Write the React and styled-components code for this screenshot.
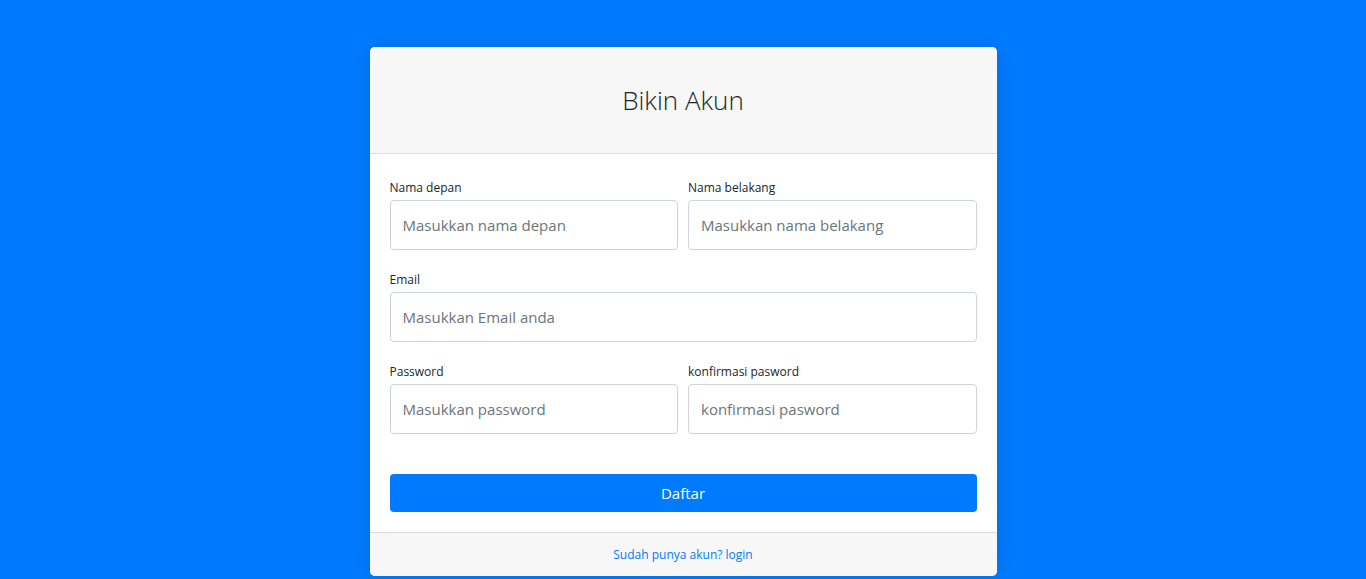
import React from 'react';
import styled, { createGlobalStyle } from 'styled-components';

const GlobalStyle = createGlobalStyle`
  * { box-sizing: border-box; }
  html, body {
    margin: 0;
    background: #007bff;
    font-family: "Open Sans", "Noto Sans", sans-serif;
    color: #212529;
  }
`;

const Page = styled.div`
  display: flex;
  justify-content: center;
  padding-top: 47px;
  min-height: 579px;
`;

const Card = styled.div`
  width: 627px;
  background: #fff;
  border-radius: 5px;
  box-shadow: 0 0 24px rgba(0, 0, 0, 0.12);
  overflow: hidden;
  align-self: flex-start;
`;

const CardHeader = styled.div`
  background: #f7f7f7;
  border-bottom: 1px solid #dcdcdc;
  height: 107px;
  display: flex;
  align-items: center;
  justify-content: center;
`;

const Title = styled.h2`
  margin: 0;
  font-weight: 300;
  font-size: 26px;
  color: #212529;
`;

const CardBody = styled.form`
  padding: 25px 20px 20px;
`;

const Row = styled.div`
  display: grid;
  grid-template-columns: ${p => (p.$cols === 1 ? '1fr' : '1fr 1fr')};
  column-gap: 10px;
  margin-bottom: 21px;
`;

const Field = styled.div`
  display: flex;
  flex-direction: column;
`;

const Label = styled.label`
  font-size: 12px;
  line-height: 18px;
  margin-bottom: 3px;
  color: #212529;
`;

const Input = styled.input`
  height: 50px;
  padding: 0 12px;
  border: 1px solid #ced4da;
  border-radius: 4px;
  font-family: inherit;
  font-size: 15px;
  color: #495057;
  &::placeholder {
    color: #6c757d;
  }
`;

const Button = styled.button`
  width: 100%;
  height: 38px;
  margin-top: 19px;
  background: #007bff;
  color: #fff;
  border: none;
  border-radius: 4px;
  font-family: inherit;
  font-size: 15px;
  cursor: pointer;
`;

const CardFooter = styled.div`
  background: #f7f7f7;
  border-top: 1px solid #dcdcdc;
  height: 44px;
  display: flex;
  align-items: center;
  justify-content: center;
`;

const Link = styled.a`
  font-size: 12px;
  color: #007bff;
  text-decoration: none;
`;

const App = () => (
  <>
    <GlobalStyle />
    <Page>
      <Card>
        <CardHeader>
          <Title>Bikin Akun</Title>
        </CardHeader>
        <CardBody onSubmit={e => e.preventDefault()}>
          <Row>
            <Field>
              <Label>Nama depan</Label>
              <Input type="text" placeholder="Masukkan nama depan" />
            </Field>
            <Field>
              <Label>Nama belakang</Label>
              <Input type="text" placeholder="Masukkan nama belakang" />
            </Field>
          </Row>
          <Row $cols={1}>
            <Field>
              <Label>Email</Label>
              <Input type="email" placeholder="Masukkan Email anda" />
            </Field>
          </Row>
          <Row>
            <Field>
              <Label>Password</Label>
              <Input type="password" placeholder="Masukkan password" />
            </Field>
            <Field>
              <Label>konfirmasi pasword</Label>
              <Input type="password" placeholder="konfirmasi pasword" />
            </Field>
          </Row>
          <Button type="submit">Daftar</Button>
        </CardBody>
        <CardFooter>
          <Link href="#">Sudah punya akun? login</Link>
        </CardFooter>
      </Card>
    </Page>
  </>
);

export default App;
